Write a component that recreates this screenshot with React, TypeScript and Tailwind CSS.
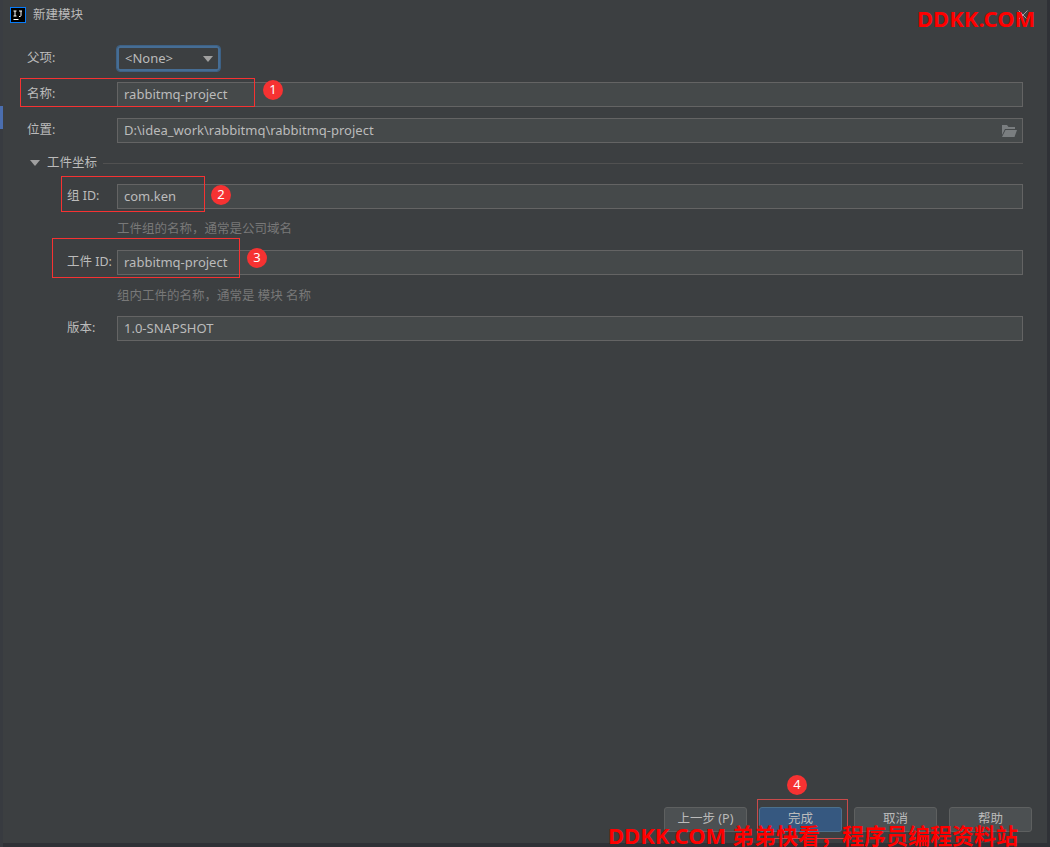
const font = { fontFamily: '"Noto Sans", "Noto Sans CJK SC", sans-serif' }

function Field({ value, children }: { value: string; children?: React.ReactNode }) {
  return (
    <div className="flex-1 h-[25px] border border-[#646464] bg-[#45494a] pl-[6px] pr-[10px] flex items-center justify-between text-[13px] text-[#bbbbbb]">
      <span>{value}</span>
      {children}
    </div>
  )
}

function Label({ text, indent }: { text: string; indent?: boolean }) {
  return (
    <div className={`w-[117px] shrink-0 text-[12.5px] text-[#bbbbbb] ${indent ? 'pl-[67px]' : 'pl-[27px]'}`}>{text}</div>
  )
}

function Hint({ text }: { text: string }) {
  return <div className="pl-[117px] text-[12.5px] leading-[20px] text-[#787878]">{text}</div>
}

function Button({ text, primary }: { text: string; primary?: boolean }) {
  return (
    <div
      className={`w-[83px] h-[25px] rounded-[3px] border flex items-center justify-center text-[12.5px] ${
        primary ? 'bg-[#365880] border-[#4c708c] text-[#bbbbbb]' : 'bg-[#4c5052] border-[#5e6060] text-[#bbbbbb]'
      }`}
    >
      {text}
    </div>
  )
}

function Mark({ n, className }: { n: number; className: string }) {
  return (
    <div className={`absolute w-5 h-5 rounded-full bg-[#f63232] text-white text-[13px] flex items-center justify-center ${className}`}>
      {n}
    </div>
  )
}

export default function App() {
  return (
    <div className="relative w-[1050px] h-[847px] overflow-hidden bg-[#2f3136] flex" style={font}>
      <div className="w-[3px] shrink-0 flex flex-col">
        <div className="h-[106px] bg-[#3a3d42]" />
        <div className="h-[23px] bg-[#4b6eaf]" />
        <div className="flex-1 bg-[#383b40]" />
      </div>

      <div className="w-[1044px] h-[843px] bg-[#3c3f41] flex flex-col">
        {/* title bar */}
        <div className="h-[30px] flex items-center pl-[7px] pr-[19px] shrink-0">
          <svg width="16" height="16" viewBox="0 0 16 16" className="shrink-0">
            <rect x="0.5" y="0.5" width="15" height="15" fill="#000" stroke="#087cfa" />
            <path d="M3.5 4h3M5 4v5M3.5 9h3M9 4h3M11 4v4.5c0 .6-.5 1-1 1H9M3.5 12.5h5" stroke="#fff" strokeWidth="1" fill="none" />
          </svg>
          <span className="ml-[7px] text-[12.5px] text-[#bbbbbb]">新建模块</span>
          <svg width="10" height="10" viewBox="0 0 10 10" className="ml-auto">
            <path d="M0.5 0.5l9 9M9.5 0.5l-9 9" stroke="#a0a0a0" fill="none" />
          </svg>
        </div>

        {/* form */}
        <div className="flex-1 pr-[24px] -ml-[3px]">
          <div className="flex items-center mt-[16px] h-[25px]">
            <Label text="父项:" />
            <div className="w-[103px] h-[25px] rounded-[3px] border-2 border-[#466d94] bg-[#3c3f41] outline outline-1 outline-[#3d6185] flex items-center justify-between pl-[6px] pr-[5px] text-[13px] text-[#bbbbbb]">
              <span>&lt;None&gt;</span>
              <svg width="10" height="6" viewBox="0 0 10 6"><path d="M0 0h10L5 6z" fill="#a0a0a0" /></svg>
            </div>
          </div>

          <div className="flex items-center mt-[11px]">
            <Label text="名称:" />
            <Field value="rabbitmq-project" />
          </div>

          <div className="flex items-center mt-[11px]">
            <Label text="位置:" />
            <Field value="D:\idea_work\rabbitmq\rabbitmq-project">
              <svg width="16" height="14" viewBox="0 0 16 14" className="-mr-[5px]">
                <path d="M1 1h5l1.5 2H14v2H4L1 11z" fill="#7a7e80" />
                <path d="M4.5 6H16l-2.5 7H1z" fill="#7a7e80" />
              </svg>
            </Field>
          </div>

          <div className="flex items-center h-[20px] mt-[10px] pl-[30px]">
            <svg width="10" height="6" viewBox="0 0 10 6"><path d="M0 0h10L5 6z" fill="#a0a0a0" /></svg>
            <span className="ml-[7px] text-[12.5px] text-[#bbbbbb]">工件坐标</span>
            <div className="flex-1 h-px bg-[#515151] ml-[6px]" />
          </div>

          <div className="flex items-center mt-[11px]">
            <Label text="组 ID:" indent />
            <Field value="com.ken" />
          </div>
          <div className="mt-[10px]"><Hint text="工件组的名称，通常是公司域名" /></div>

          <div className="flex items-center mt-[11px]">
            <Label text="工件 ID:" indent />
            <Field value="rabbitmq-project" />
          </div>
          <div className="mt-[11px]"><Hint text="组内工件的名称，通常是 模块 名称" /></div>

          <div className="flex items-center mt-[10px]">
            <Label text="版本:" indent />
            <Field value="1.0-SNAPSHOT" />
          </div>
        </div>

        {/* footer buttons */}
        <div className="flex justify-end gap-[12px] pr-[15px] pb-[11px] shrink-0">
          <Button text="上一步 (P)" />
          <Button text="完成" primary />
          <Button text="取消" />
          <Button text="帮助" />
        </div>
      </div>

      <div className="flex-1 bg-[#2f3136]" />

      {/* annotations drawn on top of the screenshot */}
      <div className="absolute left-[20px] top-[78px] w-[235px] h-[29px] border border-[#f63232]" />
      <div className="absolute left-[61px] top-[176px] w-[144px] h-[36px] border border-[#f63232]" />
      <div className="absolute left-[52px] top-[238px] w-[188px] h-[40px] border border-[#f63232]" />
      <div className="absolute left-[757px] top-[799px] w-[91px] h-[40px] border border-[#c94a4a]" />
      <Mark n={1} className="left-[263px] top-[80px]" />
      <Mark n={2} className="left-[211px] top-[185px]" />
      <Mark n={3} className="left-[247px] top-[248px]" />
      <Mark n={4} className="left-[787px] top-[775px]" />

      {/* watermarks */}
      <div className="absolute left-[917px] top-[3px] text-[22px] leading-[30px] font-bold text-[#ff0000] whitespace-nowrap">DDKK.COM</div>
      <div className="absolute left-[608px] top-[820px] text-[22px] leading-[30px] font-bold text-[#ff0000] whitespace-nowrap">DDKK.COM 弟弟快看，程序员编程资料站</div>
    </div>
  )
}
